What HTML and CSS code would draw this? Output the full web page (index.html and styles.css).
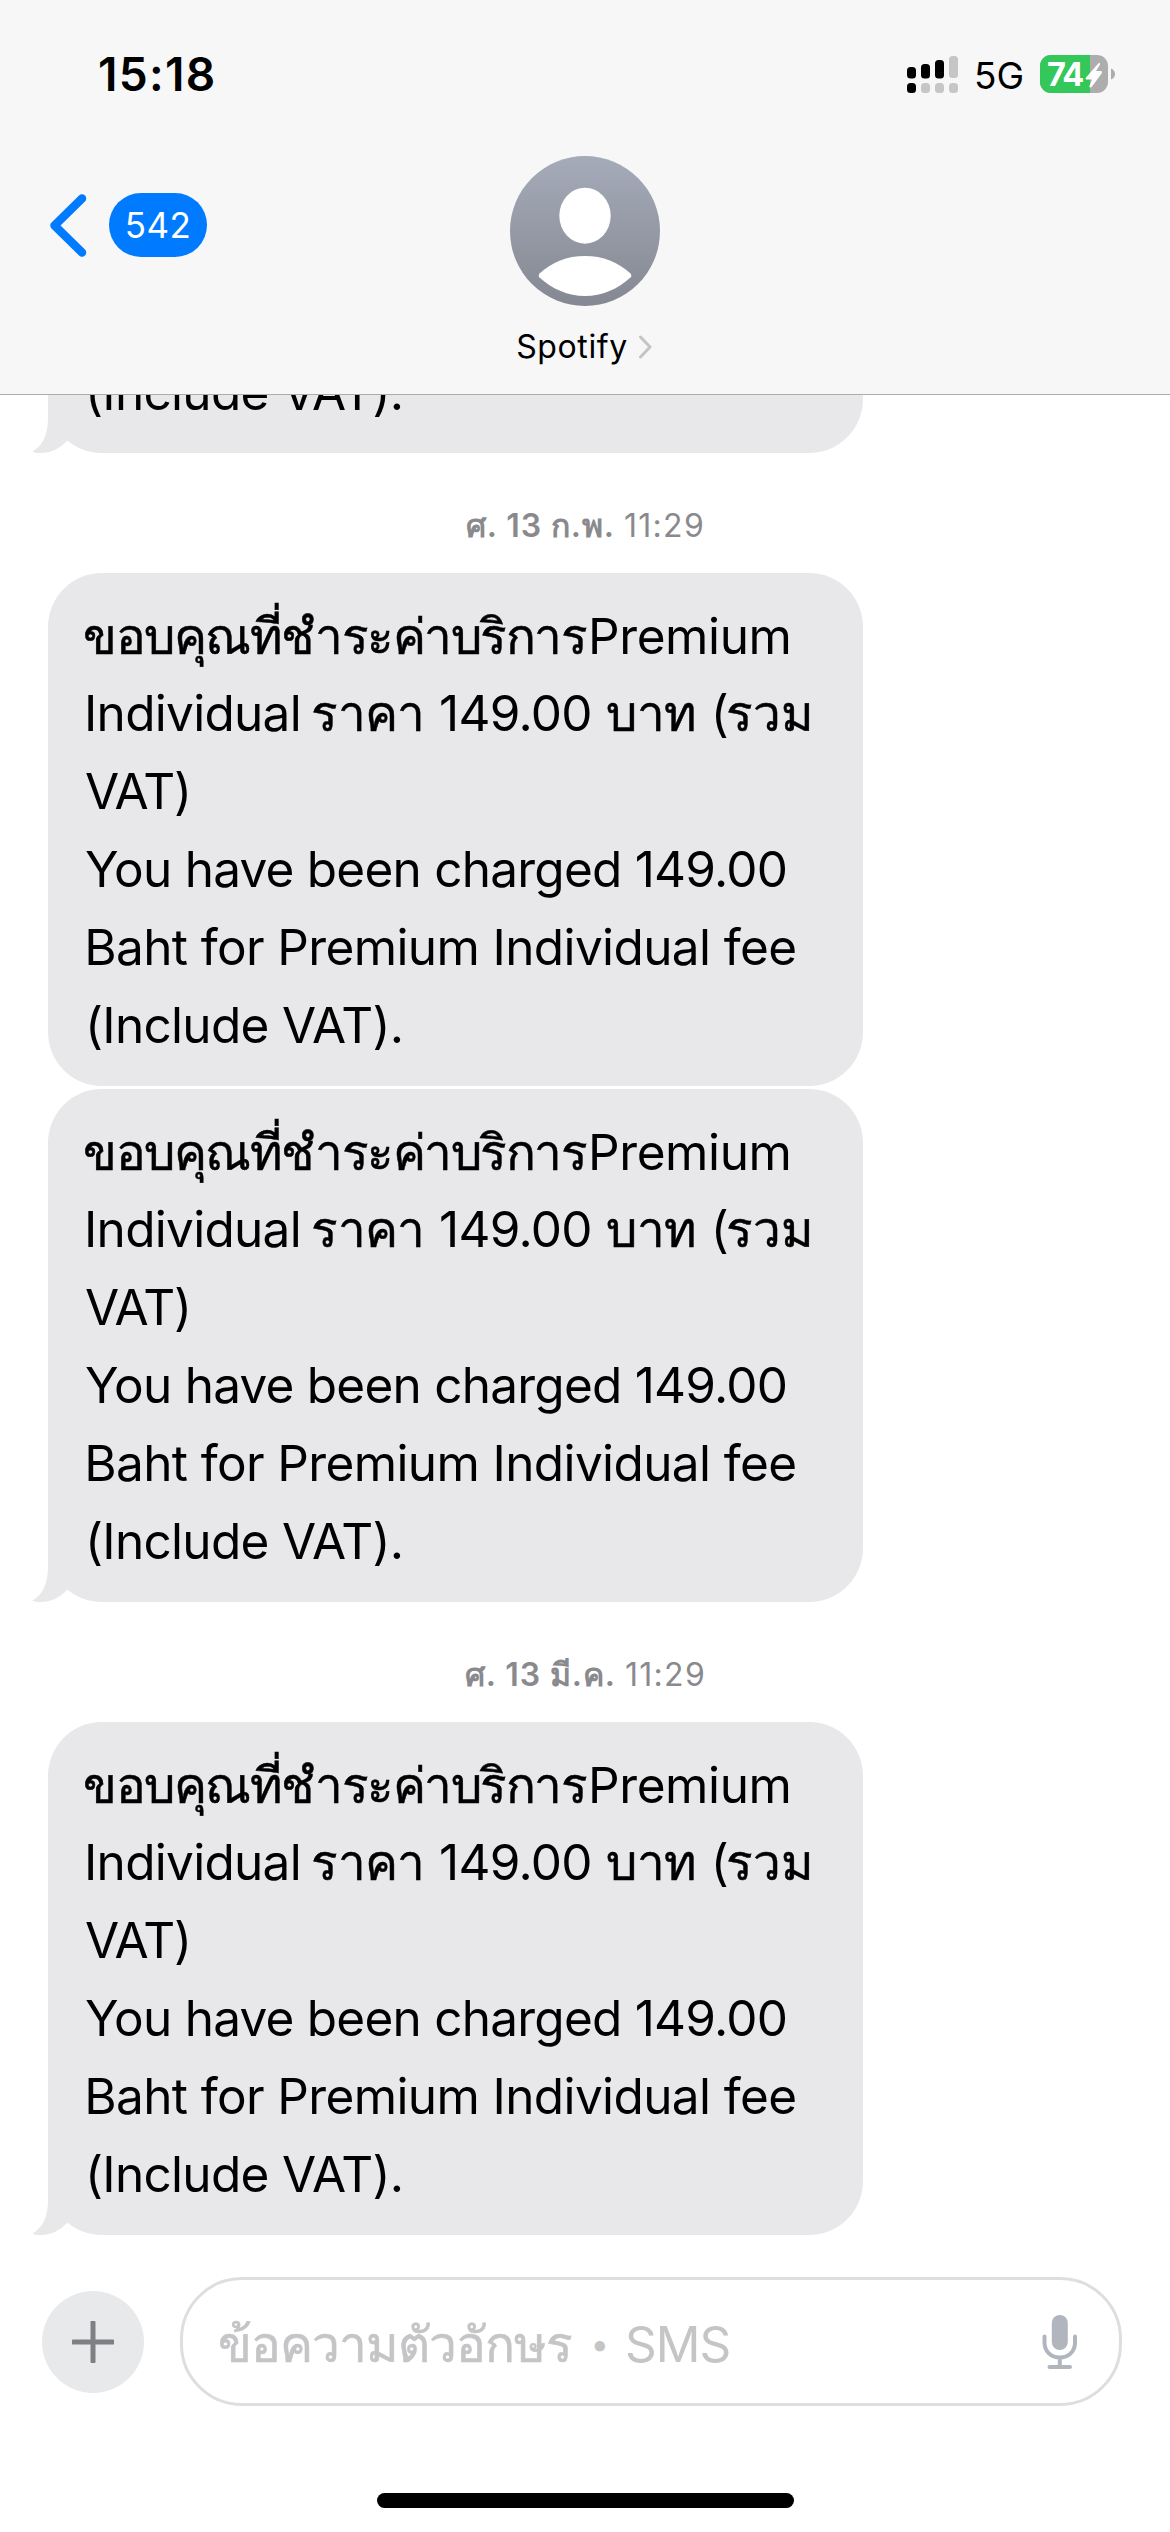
FILE: index.html
```html
<!DOCTYPE html>
<html lang="th">
<head>
<meta charset="utf-8">
<title>Spotify</title>
<link rel="stylesheet" href="styles.css">
</head>
<body>
<div class="screen">
  <header class="header">
    <div class="status">
      <span class="time">15:18</span>
      <div class="status-right">
        <svg class="signal" width="51" height="37" viewBox="0 0 51 37">
          <rect x="0" y="11" width="9" height="11.5" rx="3.5"/>
          <rect x="14" y="8" width="9" height="14.5" rx="3.5"/>
          <rect x="28" y="4" width="9" height="18.5" rx="3.5"/>
          <rect class="dim" x="42" y="0" width="9" height="22" rx="3.5"/>
          <rect x="0" y="27" width="9" height="10" rx="3.5"/>
          <rect class="dim" x="14" y="27" width="9" height="10" rx="3.5"/>
          <rect class="dim" x="28" y="27" width="9" height="10" rx="3.5"/>
          <rect class="dim" x="42" y="27" width="9" height="10" rx="3.5"/>
        </svg>
        <span class="network">5G</span>
        <svg class="battery" width="75" height="38" viewBox="0 0 75 38">
          <defs><clipPath id="shell"><rect width="68" height="38" rx="11"/></clipPath></defs>
          <g clip-path="url(#shell)">
            <rect width="68" height="38" fill="#adadad"/>
            <rect width="50" height="38" fill="#34c759"/>
          </g>
          <path d="M71 13.500Q75 15 75 19T71 24.500Z" fill="#adadad"/>
          <text class="level" x="7" y="31">74</text>
          <path d="M58.500 8.300L46 22.500Q45 24.500 47 24.500H52L49.300 31.500Q50 33.500 51.800 31.800L61.800 18.200Q62.500 16.300 61 16.100H56L60 9.500Q60 7 58.500 8.300Z" fill="#fff"/>
        </svg>
      </div>
    </div>
    <nav class="nav">
      <div class="back">
        <svg width="38" height="64" viewBox="0 0 38 64"><path d="M33 5.500L5.500 32.500L33 59.500" fill="none" stroke="#007aff" stroke-width="8.500" stroke-linecap="round" stroke-linejoin="round"/></svg>
        <span class="unread">542</span>
      </div>
      <div class="contact">
        <svg class="avatar" width="150" height="150" viewBox="0 0 150 150">
          <defs><linearGradient id="av" x2="0" y2="1"><stop offset="0" stop-color="#a5abb9"/><stop offset="1" stop-color="#848892"/></linearGradient></defs>
          <circle cx="75" cy="75" r="75" fill="url(#av)"/>
          <ellipse cx="75" cy="59.700" rx="25.700" ry="28" fill="#fff"/>
          <path d="M29.500 117.500Q28 119.500 29.500 121.500C42 133 58 140 75 140S108 133 120.500 121.500Q122 119.500 120.500 117.500C108 106 93 100 75 100S42 106 29.500 117.500Z" fill="#fff"/>
        </svg>
        <div class="name-row">
          <span class="name">Spotify</span>
          <svg width="13" height="24" viewBox="0 0 13 24"><path d="M1.500 2L11 12L1.500 22" fill="none" stroke="#c4c4c6" stroke-width="3" stroke-linecap="round" stroke-linejoin="round"/></svg>
        </div>
      </div>
    </nav>
  </header>

  <main class="thread">
    <div class="bubble">
      <p class="line include">(Include VAT).</p>
      <svg class="tail" width="60" height="53" viewBox="0 0 60 53"><path d="M18 0V18C18 36 12 46 2.500 51.500Q5 53 11 53C21 53 29 49 37 41L60 32V0Z"/></svg>
    </div>

    <div class="stamp"><b>ศ. 13 ก.พ.</b> <span>11:29</span></div>

    <div class="bubble">
      <p class="line"><span class="th thanks">ขอบคุณที่ชำระค่าบริการ</span><span class="premium">Premium</span></p>
      <p class="line price">Individual <span class="th rate">ราคา</span> 149.00 <span class="th">บาท</span> (<span class="th sum">รวม</span></p>
      <p class="line vat">VAT)</p>
      <p class="line you">You have been charged 149.00</p>
      <p class="line baht">Baht for Premium Individual fee</p>
      <p class="line include">(Include VAT).</p>
    </div>
    <div class="bubble follow">
      <p class="line"><span class="th thanks">ขอบคุณที่ชำระค่าบริการ</span><span class="premium">Premium</span></p>
      <p class="line price">Individual <span class="th rate">ราคา</span> 149.00 <span class="th">บาท</span> (<span class="th sum">รวม</span></p>
      <p class="line vat">VAT)</p>
      <p class="line you">You have been charged 149.00</p>
      <p class="line baht">Baht for Premium Individual fee</p>
      <p class="line include">(Include VAT).</p>
      <svg class="tail" width="60" height="53" viewBox="0 0 60 53"><path d="M18 0V18C18 36 12 46 2.500 51.500Q5 53 11 53C21 53 29 49 37 41L60 32V0Z"/></svg>
    </div>

    <div class="stamp"><b>ศ. 13 มี.ค.</b> <span>11:29</span></div>

    <div class="bubble">
      <p class="line"><span class="th thanks">ขอบคุณที่ชำระค่าบริการ</span><span class="premium">Premium</span></p>
      <p class="line price">Individual <span class="th rate">ราคา</span> 149.00 <span class="th">บาท</span> (<span class="th sum">รวม</span></p>
      <p class="line vat">VAT)</p>
      <p class="line you">You have been charged 149.00</p>
      <p class="line baht">Baht for Premium Individual fee</p>
      <p class="line include">(Include VAT).</p>
      <svg class="tail" width="60" height="53" viewBox="0 0 60 53"><path d="M18 0V18C18 36 12 46 2.500 51.500Q5 53 11 53C21 53 29 49 37 41L60 32V0Z"/></svg>
    </div>
  </main>

  <footer class="footer">
    <div class="composer">
      <div class="plus">
        <svg width="42" height="42" viewBox="0 0 42 42"><path d="M21 1.500V40.500M1.500 21H40.500" stroke="#7f8084" stroke-width="5" stroke-linecap="round"/></svg>
      </div>
      <div class="field">
        <div class="placeholder"><span class="hint">ข้อความตัวอักษร</span> <span class="dot">•</span> <span class="sms">SMS</span></div>
        <svg width="36" height="54" viewBox="0 0 36 54">
          <rect x="9.800" y="0" width="16" height="35" rx="8" fill="#b1b6be"/>
          <path d="M2.500 21.500V27.500C2.500 36.500 9 42.500 17.800 42.500S33 36.500 33 27.500V21.500M17.800 43V51M7.500 52H28" fill="none" stroke="#b1b6be" stroke-width="4" stroke-linecap="round"/>
        </svg>
      </div>
    </div>
    <div class="home-bar"></div>
  </footer>
</div>
</body>
</html>
```
FILE: styles.css
```css
* {
  box-sizing: border-box;
}

body {
  margin: 0;
  background: #fff;
  color: #000;
  font-family: Inter, sans-serif;
}

svg {
  display: block;
  flex: none;
}

.screen {
  width: 1170px;
  height: 2532px;
  display: flex;
  flex-direction: column;
  overflow: hidden;
}

/* Header */
.header {
  height: 395px;
  flex: none;
  background: #f7f7f8;
  border-bottom: 1px solid #acacac;
}

.status {
  height: 156px;
  display: flex;
  justify-content: space-between;
  align-items: flex-start;
  padding: 44px 55px 0 98px;
}

.time {
  font-size: 46px;
  font-weight: 600;
  line-height: 60px;
  letter-spacing: 1.3px;
}

.status-right {
  display: flex;
  align-items: flex-start;
  gap: 16px;
}

.signal {
  margin-top: 12px;
}

.signal .dim {
  fill: #c6c6c6;
}

.network {
  padding-top: 2px;
  font-size: 37px;
  line-height: 60px;
}

.battery {
  margin-top: 11px;
}

.level {
  font: 700 32.5px Inter, sans-serif;
  letter-spacing: -1.8px;
  fill: #fff;
}

.nav {
  display: grid;
  grid-template-columns: 1fr auto 1fr;
}

.back {
  height: 64px;
  margin-top: 37px;
  padding-left: 49px;
  display: flex;
  align-items: center;
  gap: 22px;
}

.unread {
  width: 98px;
  height: 64px;
  border-radius: 32px;
  background: #007aff;
  color: #fff;
  font-size: 35px;
  line-height: 64px;
  letter-spacing: 0.5px;
  text-align: center;
}

.contact {
  display: flex;
  flex-direction: column;
  align-items: center;
}

.name-row {
  margin: 21px 2px 0 0;
  display: flex;
  align-items: center;
  gap: 11px;
}

.name {
  font-size: 32px;
  line-height: 40px;
  letter-spacing: 0.6px;
}

/* Conversation */
.thread {
  height: 1840px;
  flex: none;
  display: flex;
  flex-direction: column;
  justify-content: flex-end;
  align-items: flex-start;
  overflow: hidden;
}

.bubble {
  position: relative;
  flex: none;
  width: 815px;
  margin-left: 48px;
  padding: 24.500px 20px 21.700px 37px;
  border-radius: 54px;
  background: #e8e8ea;
}

.follow {
  margin-top: 3px;
}

.tail {
  position: absolute;
  left: -18px;
  bottom: 0;
  fill: #e8e8ea;
}

.line {
  margin: 0;
  font-size: 49.5px;
  line-height: 77.800px;
  letter-spacing: -0.7px;
  white-space: nowrap;
}

.th {
  -webkit-text-stroke: 0.5px currentColor;
}

.thanks {
  margin-left: -2px;
  letter-spacing: -1.5px;
}

.premium {
  margin-left: 2px;
  letter-spacing: -0.4px;
}

.price {
  margin-left: -1px;
  word-spacing: 1.2px;
}

.rate {
  margin-left: -4px;
}

.sum {
  margin-left: -2px;
  letter-spacing: -0.2px;
}

.vat {
  letter-spacing: -1.2px;
}

.you {
  letter-spacing: -0.76px;
}

.baht {
  margin-left: -0.8px;
  letter-spacing: -0.62px;
}

.stamp {
  height: 120px;
  flex: none;
  align-self: stretch;
  padding: 25px 0 0 1px;
  color: #8a8a8e;
  font-size: 32px;
  line-height: 96px;
  text-align: center;
}

.stamp b {
  font-weight: 600;
  letter-spacing: 0.9px;
}

.stamp span {
  letter-spacing: 1.3px;
}

/* Composer */
.footer {
  flex: 1;
  padding-top: 42px;
}

.composer {
  display: flex;
  align-items: center;
  gap: 36px;
  padding: 0 48px 0 42px;
}

.plus {
  width: 102px;
  height: 102px;
  border-radius: 50%;
  background: #e8e9eb;
  display: grid;
  place-items: center;
}

.field {
  flex: 1;
  height: 129px;
  border: 3px solid #dedede;
  border-radius: 62px;
  display: flex;
  align-items: center;
  justify-content: space-between;
  padding: 0 41px 0 35px;
}

.placeholder {
  padding-top: 4px;
  color: #c5c5c7;
  font-size: 49.5px;
  line-height: 78px;
  white-space: nowrap;
}

.hint {
  letter-spacing: -1px;
  -webkit-text-stroke: 0.6px currentColor;
}

.dot {
  margin: 0 2px 0 4.6px;
  font-size: 33px;
  line-height: 1;
  vertical-align: 5.5px;
}

.sms {
  letter-spacing: -1px;
}

.home-bar {
  width: 417px;
  height: 15px;
  margin: 87px auto 0;
  border-radius: 8px;
  background: #000;
}
```
